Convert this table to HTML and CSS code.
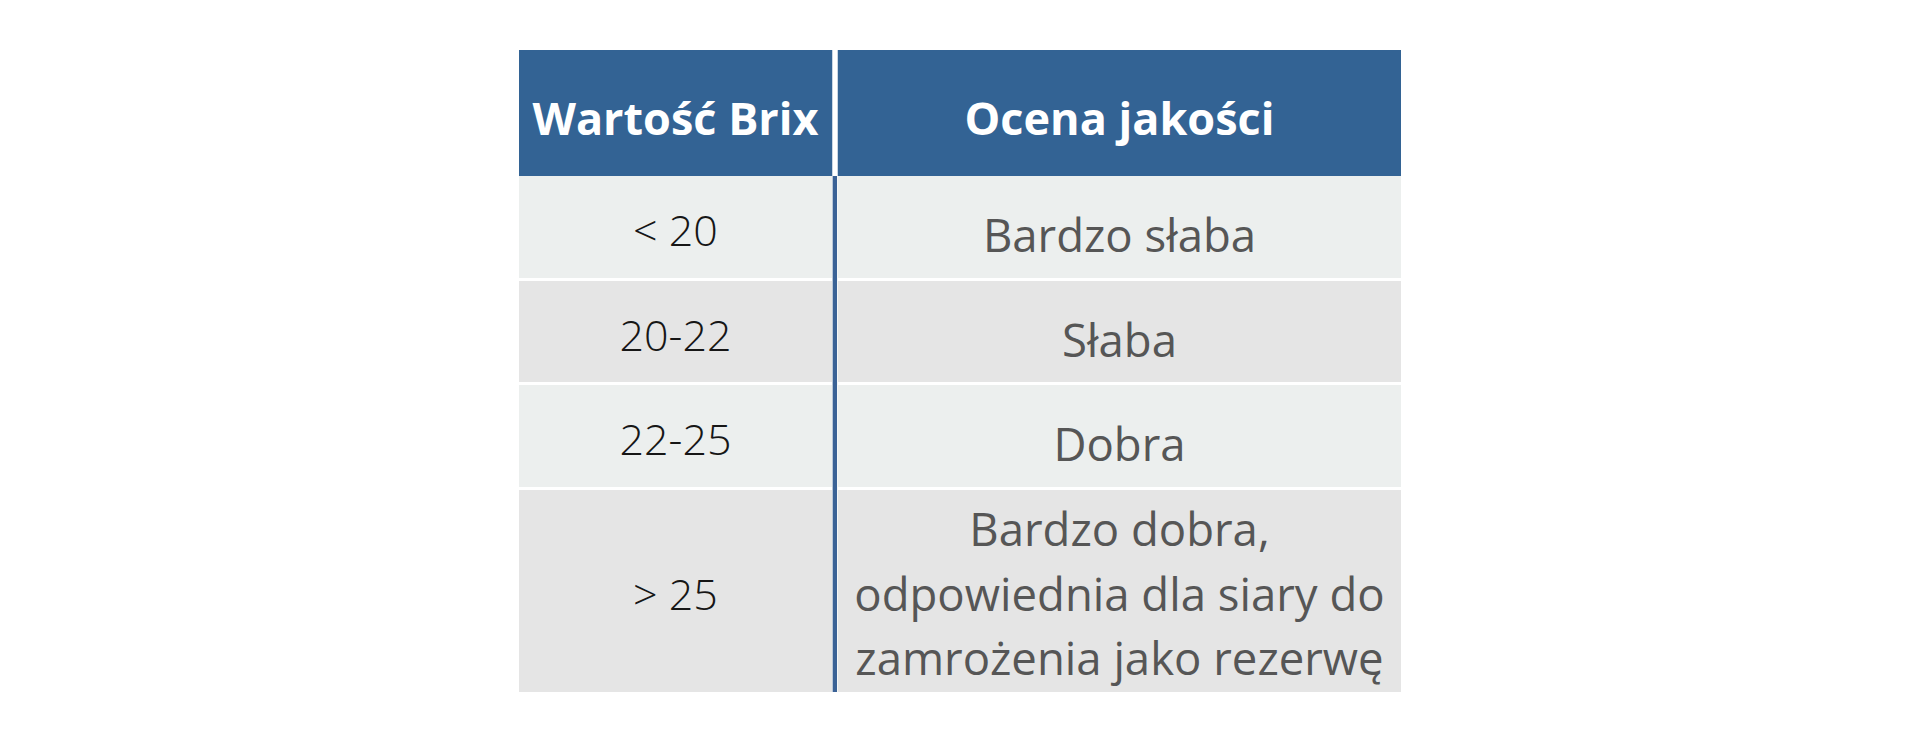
FILE: index.html
```html
<!DOCTYPE html>
<html lang="pl">
<head>
<meta charset="utf-8">
<title>Wartość Brix</title>
<link rel="stylesheet" href="styles.css">
</head>
<body>
<div class="table">
  <div class="head">
    <div class="hcell">Wartość Brix</div>
    <div class="hsep"></div>
    <div class="hcell">Ocena jakości</div>
  </div>
  <div class="body">
    <div class="divider"></div>
    <div class="cell val odd">&lt; 20</div>
    <div class="cell txt odd">Bardzo słaba</div>
    <div class="cell val even">20-22</div>
    <div class="cell txt even">Słaba</div>
    <div class="cell val odd">22-25</div>
    <div class="cell txt odd">Dobra</div>
    <div class="cell val even">&gt; 25</div>
    <div class="cell txt even multi"><span class="line">Bardzo dobra,</span><span class="line">odpowiednia dla siary do</span><span class="line">zamrożenia jako rezerwę</span></div>
  </div>
</div>
</body>
</html>
```
FILE: styles.css
```css
html, body {
  margin: 0;
  padding: 0;
  background: #ffffff;
}

body {
  font-family: "Open Sans", "Noto Sans", "Liberation Sans", sans-serif;
}

.table {
  width: 882px;
  margin: 50px auto 0;
}

.head {
  display: grid;
  grid-template-columns: 313px 6px 563px;
  height: 126px;
}

.hcell {
  background: #336394;
  color: #ffffff;
  font-weight: 700;
  font-size: 45px;
  display: flex;
  align-items: center;
  justify-content: center;
  padding-top: 9px;
  box-sizing: border-box;
  white-space: nowrap;
}

.hsep {
  background: linear-gradient(to right, #c9d6e4 0 1px, #ffffff 1px 5px, #c9d6e4 5px 6px);
}

.body {
  display: grid;
  grid-template-columns: 313px 6px 563px;
  grid-template-rows: 102px 101px 102px 202px;
  row-gap: 3px;
  background: #ffffff;
}

.divider {
  grid-column: 2;
  grid-row: 1 / -1;
  background: linear-gradient(to right, #b9c7d8 0 1px, #3a6296 1px 5px, #f4f6f6 5px 6px);
}

.cell {
  display: flex;
  align-items: center;
  justify-content: center;
  text-align: center;
  box-sizing: border-box;
  white-space: nowrap;
}

.odd { background: #ecefee; }
.even { background: #e5e5e5; }

.val {
  grid-column: 1;
  color: #161616;
  font-size: 43px;
  font-weight: 300;
  padding-top: 5px;
}

.txt {
  grid-column: 3;
  color: #565656;
  font-size: 45.5px;
  line-height: 64.5px;
  padding-top: 15px;
}

.multi {
  flex-direction: column;
  padding-top: 4px;
}

.line {
  display: block;
}
```
